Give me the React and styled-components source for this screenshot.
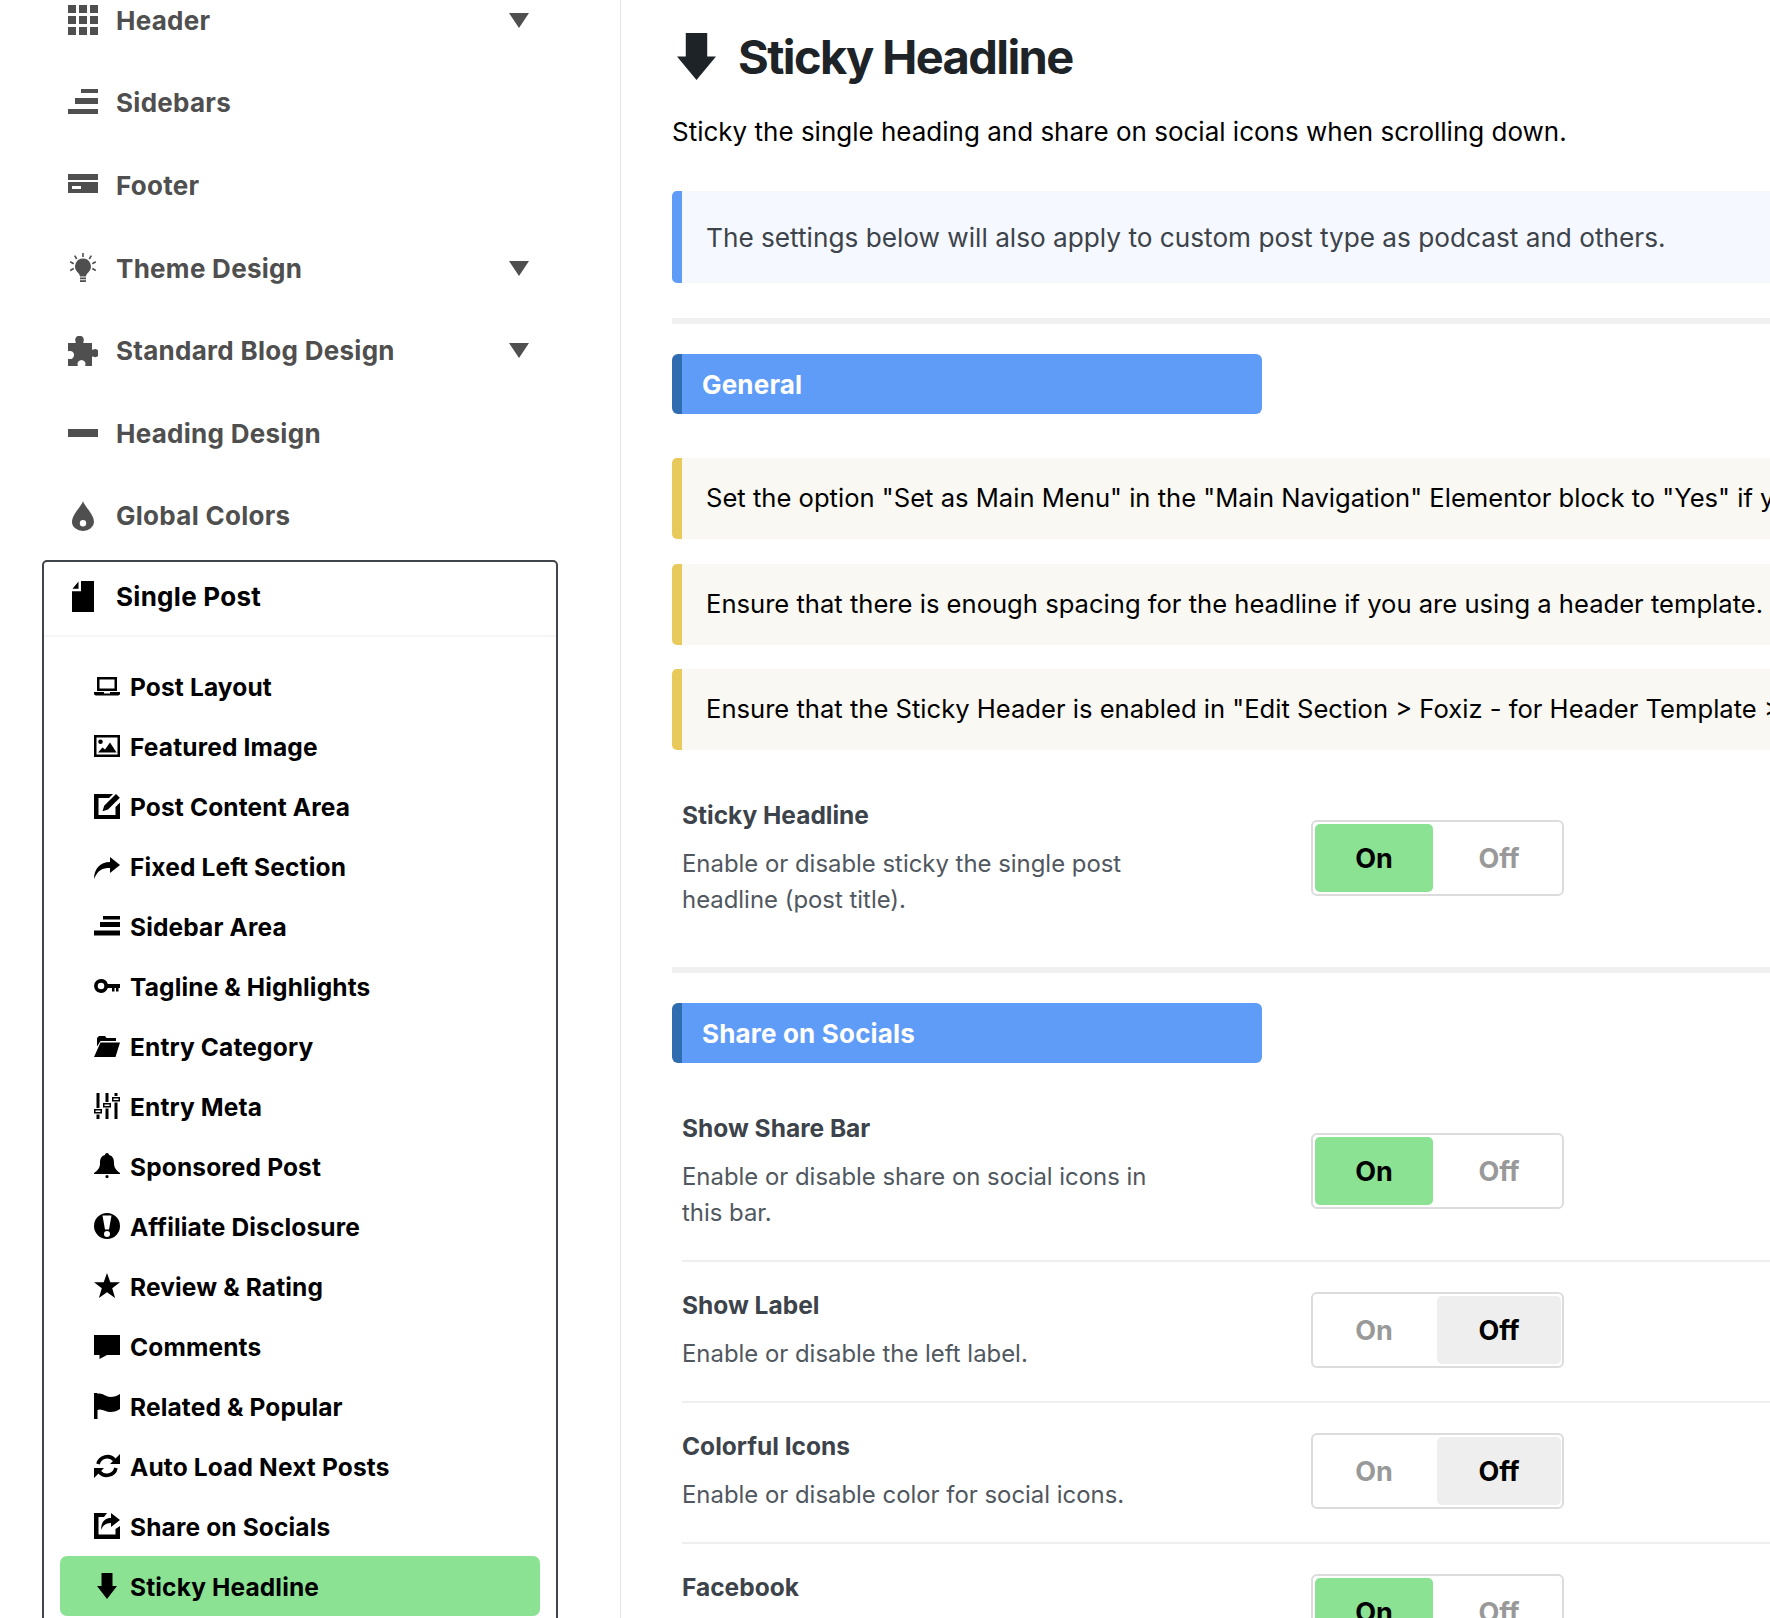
import React from 'react';
import styled, { createGlobalStyle } from 'styled-components';

const GlobalStyle = createGlobalStyle`
    html, body {
        margin: 0;
        padding: 0;
        background: #fff;
        font-family: Inter, "Noto Sans", "Liberation Sans", sans-serif;
    }
`

const Page = styled.div`
    display: flex;
    width: 1770px;
    height: 1618px;
    overflow: hidden;
`
const Sidebar = styled.aside`
    flex: 0 0 621px;
    box-sizing: border-box;
    height: 1618px;
    border-right: 1px solid #e4e4e4;
    padding: 0 62px 0 42px;
`
const TopMenu = styled.ul`
    list-style: none;
    margin: -21px 0 0;
    padding: 0;
`
const TopItem = styled.li`
    display: flex;
    align-items: center;
    height: 82.6px;
    padding-left: 26px;
    color: #4f4f4f;
    font-size: 26px;
    font-weight: 700;
    letter-spacing: .28px;
    svg { flex: none; }
`
const TopLabel = styled.span`
    flex: 1;
    margin-left: 18px;
`
const Caret = styled.i`
    width: 0;
    height: 0;
    margin-right: 29px;
    border-left: 10px solid transparent;
    border-right: 10px solid transparent;
    border-top: 15px solid #4f4f4f;
`
const Panel = styled.section`
    box-sizing: border-box;
    width: 516px;
    margin-top: 3px;
    height: 1200px;
    border: 2px solid #40454b;
    border-radius: 5px;
`
const PanelHead = styled.div`
    display: flex;
    align-items: center;
    box-sizing: border-box;
    height: 75px;
    padding: 0 0 4px 28px;
    border-bottom: 2px solid #f6f6f6;
    color: #000;
    font-size: 26px;
    font-weight: 700;
    letter-spacing: .28px;
    span { margin-left: 22px; }
`
const SubMenu = styled.ul`
    list-style: none;
    margin: 0;
    padding: 19px 16px 0;
`
const SubItem = styled.li`
    display: flex;
    align-items: center;
    height: 60px;
    padding-left: 34px;
    border-radius: 7px;
    color: #000;
    font-size: 24.5px;
    font-weight: 700;
    letter-spacing: .14px;
    background: ${props => props.$active ? '#8ae292' : 'transparent'};
    span { margin: 1px 0 0 10px; }
`
const Main = styled.main`
    flex: 1;
    min-width: 0;
    padding: 0 0 0 51px;
`
const Title = styled.h1`
    display: flex;
    align-items: center;
    gap: 22px;
    height: 56px;
    margin: 28px 0 0 5px;
    color: #1d2327;
    font-size: 47px;
    font-weight: 700;
    letter-spacing: -1.6px;
`
const Lead = styled.p`
    margin: 31px 0 0;
    color: #000;
    font-size: 26px;
    line-height: 34px;
`
const Note = styled.div`
    display: flex;
    align-items: center;
    box-sizing: border-box;
    height: ${props => props.$tall ? '92px' : '81px'};
    padding: 0 0 ${props => props.$tall ? '0' : '2px'} 24px;
    border-left: 10px solid ${props => props.$tall ? '#5f9cf7' : '#e8ca5c'};
    border-radius: 5px 0 0 5px;
    background: ${props => props.$tall ? '#f5f8fe' : '#f9f8f3'};
    color: ${props => props.$tall ? '#3c434a' : '#000'};
    font-size: ${props => props.$tall ? '26.2px' : '25.6px'};
    white-space: nowrap;
    overflow: hidden;
`
const InfoWrap = styled.div`
    margin-top: 42px;
`
const NoteStack = styled.div`
    display: flex;
    flex-direction: column;
    gap: 24.5px;
    margin-top: 44px;
`
const Rule = styled.hr`
    height: 6px;
    margin: ${props => props.$first ? '35px' : '0'} 0 30px;
    border: 0;
    background: #f0f0f0;
`
const SectionBar = styled.h2`
    display: flex;
    align-items: center;
    box-sizing: border-box;
    width: 590px;
    height: 60px;
    margin: 0;
    padding-left: 20px;
    border-left: 10px solid #2f6db0;
    border-radius: 6px;
    background: #5f9cf7;
    color: #fff;
    font-size: 26px;
    font-weight: 700;
    letter-spacing: .18px;
`
const FieldGroup = styled.div`
    padding: 22px 0 20px;
`
const Field = styled.div`
    display: flex;
    align-items: center;
    margin-left: 10px;
    padding: 28px 0 29px;
    border-bottom: 2px solid #efefef;
    &:last-child { border-bottom: 0; }
`
const FieldText = styled.div`
    width: 629px;
    flex: none;
`
const FieldName = styled.div`
    color: #3c434a;
    font-size: 24.5px;
    font-weight: 650;
    line-height: 30px;
`
const FieldDesc = styled.div`
    max-width: 480px;
    margin-top: 16px;
    color: #50575e;
    font-size: 23.9px;
    line-height: 36px;
`
const Toggle = styled.div`
    display: flex;
    box-sizing: border-box;
    width: 253px;
    height: 76px;
    margin-top: -2px;
    gap: 4px;
    padding: 2px;
    border: 2px solid #dcdcdc;
    border-radius: 6px;
`
const ToggleBtn = styled.div`
    display: flex;
    align-items: center;
    justify-content: center;
    flex: ${props => props.$wide ? '0 0 124px' : '0 0 118px'};
    border-radius: 5px;
    color: ${props => props.$on ? '#000' : '#999'};
    background: ${props => props.$on ? props.$bg : 'transparent'};
    font-size: 27px;
    font-weight: 700;
`

const Icon = ({ size = 26, height, color = 'currentColor', children, box = '0 0 26 26' }) => (
    <svg width={size} height={height || size} viewBox={box} fill={color} preserveAspectRatio="none">{children}</svg>
)

const downArrow = <path d="M7.500 0h11v13H23L13 26 3 13h4.500z" />

const icons = {
    grid: <><rect x="0" y="0" width="8" height="8" /><rect x="11" y="0" width="8" height="8" /><rect x="22" y="0" width="8" height="8" /><rect x="0" y="11" width="8" height="8" /><rect x="11" y="11" width="8" height="8" /><rect x="22" y="11" width="8" height="8" /><rect x="0" y="22" width="8" height="8" /><rect x="11" y="22" width="8" height="8" /><rect x="22" y="22" width="8" height="8" /></>,
    sidebars: <><rect x="13" y="1" width="17" height="4" /><rect x="7" y="10" width="23" height="6" /><rect x="0" y="21" width="30" height="5" /></>,
    footer: <path fillRule="evenodd" d="M0 4h30v6H0zM0 12h30v11H0zM4 16v3h9v-3z" />,
    bulb: <><path d="M15 5.500a8 8 0 0 0-5.500 13.700c1.500 1.500 2.500 3 2.500 4.300h6c0-1.300 1-2.800 2.500-4.300A8 8 0 0 0 15 5.500z" /><rect x="12" y="24.500" width="6" height="1.800" /><rect x="12" y="27.200" width="6" height="1.800" /><path d="M14.200 0h1.600v4h-1.600zM6 3l1.400-.8 2 3.400-1.400.8zM24 3l-1.400-.8-2 3.400 1.400.8zM1.800 9.500l.8-1.400 3.500 2-.8 1.400zM28.200 9.500l-.8-1.400-3.500 2 .8 1.400zM2.600 18.200l-.8-1.400 3.500-2 .8 1.400zM27.400 18.200l.8-1.400-3.500-2-.8 1.400z" /></>,
    puzzle: <path fillRule="evenodd" d="M0 7h7c.8 0 1-.6.6-1.300A4.300 4.300 0 1 1 15.400 5.700C15 6.400 15.200 7 16 7h8v6c0 .8.6 1 1.300.6a4 4 0 1 1 0 7c-.7-.4-1.300-.2-1.300.6V30h-6c-.8 0-1-.6-.6-1.200a4 4 0 1 0-7.800 0c.4.600.2 1.200-.6 1.200H0v-6.500c0-.8.6-1 1.200-.6a4 4 0 1 0 0-7.800c-.6.4-1.200.2-1.200-.6z" />,
    dash: <rect x="0" y="11" width="30" height="8" />,
    drop: <path fillRule="evenodd" d="M15 0c1 5 11 13 11 21a11 9 0 0 1-22 0C4 13 14 5 15 0zM15 19a3.200 3.200 0 1 0 0 6.400 3.200 3.200 0 0 0 0-6.400z" />,
    single: <path d="M9 0h13v30H0V10h9zM6.500 .5V7.500H.5z" />,
    laptop: <path fillRule="evenodd" d="M3 4h20v14H3zM5.500 6.500v9h15v-9zM0 19h10v1.500h6V19h10v1.500c0 1-1 2-2 2H2c-1 0-2-1-2-2z" />,
    image: <path fillRule="evenodd" d="M0 2h26v22H0zM2.500 4.500v17h21v-17zM6.500 6.500a2.300 2.300 0 1 1 0 4.600 2.300 2.300 0 0 1 0-4.600zM4 19.500l4.500-5 2.500 2 5-7 6.500 10z" />,
    edit: <><path d="M0 1h19l-4 4H4.500v17h17v-8l4.500-4.500V26H0z" /><path d="M22 1l3.800 3.800L14 16.500l-5.500 1.700 1.700-5.500z" /></>,
    share: <path d="M16 4l10 8-10 8v-5c-8 0-12 2-16 11 0-10 6-17 16-17z" />,
    bars: <><rect x="9" y="3" width="17" height="3.500" /><rect x="6" y="9" width="20" height="5" /><rect x="0" y="17.500" width="26" height="5" /></>,
    key: <path fillRule="evenodd" d="M7 6a7 7 0 0 1 6.800 5H26v4h-1.500v3.500h-2.500V15h-1.500v3.500H18V15h-4.200A7 7 0 1 1 7 6zM7 9.700a3.300 3.300 0 1 0 0 6.600 3.300 3.300 0 0 0 0-6.600z" />,
    folder: <path d="M3 13.500V5l2-2h6l1.500 2H22v3H6.500zM6.500 9.500H26L21.500 24H0z" />,
    sliders: <path fillRule="evenodd" d="M2.500 0h3v15h-3zM0 16h8v4.500H0zM1.500 17.500V19h5v-1.500zM2.500 21.500h3V26h-3zM11.500 0h3v9h-3zM9 10h8v4.500H9zM10.500 11.500V13h5v-1.500zM11.500 15.500h3V26h-3zM20.500 0h3v3h-3zM18 4h8v4.500h-8zM19.500 5.500V7h5V5.500zM20.500 9.500h3V26h-3z" />,
    bell: <path d="M13 0a2 2 0 0 1 2 2c4 1 5 4 5 8 0 5 2 7 6 10v1H0v-1c4-3 6-5 6-10 0-4 1-7 5-8a2 2 0 0 1 2-2zM13 22a1.600 1.600 0 1 1 0 3.200 1.600 1.600 0 0 1 0-3.200z" />,
    alert: <path fillRule="evenodd" d="M13 0a13 13 0 1 1 0 26 13 13 0 0 1 0-26zM8.500 2.500L11 16.500h4l2.500-14zM13 18a3 3 0 1 0 0 6 3 3 0 0 0 0-6z" />,
    star: <path d="M13 0l3.300 9.200h9.700l-7.800 6 2.900 9.800-8.100-5.800L4.900 25l2.900-9.800-7.800-6h9.700z" />,
    comment: <path d="M0 2h26v20H13l-7.500 4v-4H0z" />,
    flag: <path d="M0 0h3.500v1c4-2 8 3 13 3 3 0 7-1 9.500-3v15c-2.500 2-6 3-9.500 3-5 0-9-4-13-2v9H0z" />,
    refresh: <><path d="M4 11A9.500 9.500 0 0 1 20.500 7M22 15A9.500 9.500 0 0 1 5.500 19" fill="none" stroke="currentColor" strokeWidth="3.600" /><path d="M26 1v10H16zM0 25V15h10z" /></>,
    shareBox: <><path d="M0 0h13l-3 4H4.500v17.500h17V16l4.500-3v13H0z" /><path d="M17 0l9 7-9 7v-4c-5 0-8 2-10 7 0-8 4-12 10-12z" /></>,
    down: downArrow,
}

const topItems = [
    { label: 'Header', icon: icons.grid, caret: true },
    { label: 'Sidebars', icon: icons.sidebars },
    { label: 'Footer', icon: icons.footer },
    { label: 'Theme Design', icon: icons.bulb, caret: true },
    { label: 'Standard Blog Design', icon: icons.puzzle, caret: true },
    { label: 'Heading Design', icon: icons.dash },
    { label: 'Global Colors', icon: icons.drop },
]

const subItems = [
    ['Post Layout', icons.laptop],
    ['Featured Image', icons.image],
    ['Post Content Area', icons.edit],
    ['Fixed Left Section', icons.share],
    ['Sidebar Area', icons.bars],
    ['Tagline & Highlights', icons.key],
    ['Entry Category', icons.folder],
    ['Entry Meta', icons.sliders],
    ['Sponsored Post', icons.bell],
    ['Affiliate Disclosure', icons.alert],
    ['Review & Rating', icons.star],
    ['Comments', icons.comment],
    ['Related & Popular', icons.flag],
    ['Auto Load Next Posts', icons.refresh],
    ['Share on Socials', icons.shareBox],
    ['Sticky Headline', icons.down, true],
]

const notices = [
    'Set the option "Set as Main Menu" in the "Main Navigation" Elementor block to "Yes" if you are using a header template.',
    'Ensure that there is enough spacing for the headline if you are using a header template.',
    'Ensure that the Sticky Header is enabled in "Edit Section > Foxiz - for Header Template > Sticky Header".',
]

const SwitchField = ({ name, desc, on }) => (
    <Field>
        <FieldText>
            <FieldName>{name}</FieldName>
            <FieldDesc>{desc}</FieldDesc>
        </FieldText>
        <Toggle>
            <ToggleBtn $on={on} $bg="#8ae292">On</ToggleBtn>
            <ToggleBtn $on={!on} $bg="#eeeeee" $wide>Off</ToggleBtn>
        </Toggle>
    </Field>
)

export default function App() {
    return (
        <Page>
            <GlobalStyle />
            <Sidebar>
                <TopMenu>
                    {topItems.map(item => (
                        <TopItem key={item.label}>
                            <Icon size={30} box="0 0 30 30">{item.icon}</Icon>
                            <TopLabel>{item.label}</TopLabel>
                            {item.caret && <Caret />}
                        </TopItem>
                    ))}
                </TopMenu>
                <Panel>
                    <PanelHead>
                        <Icon size={22} height={31} box="0 0 22 30">{icons.single}</Icon>
                        <span>Single Post</span>
                    </PanelHead>
                    <SubMenu>
                        {subItems.map(([label, icon, active]) => (
                            <SubItem key={label} $active={active}>
                                <Icon>{icon}</Icon>
                                <span>{label}</span>
                            </SubItem>
                        ))}
                    </SubMenu>
                </Panel>
            </Sidebar>
            <Main>
                <Title>
                    <Icon size={39} height={47} color="#1d2327" box="3 0 20 26">{downArrow}</Icon>
                    Sticky Headline
                </Title>
                <Lead>Sticky the single heading and share on social icons when scrolling down.</Lead>
                <InfoWrap>
                    <Note $tall>The settings below will also apply to custom post type as podcast and others.</Note>
                </InfoWrap>
                <Rule $first />
                <SectionBar>General</SectionBar>
                <NoteStack>
                    {notices.map(text => <Note key={text}>{text}</Note>)}
                </NoteStack>
                <FieldGroup>
                    <SwitchField
                        name="Sticky Headline"
                        desc="Enable or disable sticky the single post headline (post title)."
                        on
                    />
                </FieldGroup>
                <Rule />
                <SectionBar>Share on Socials</SectionBar>
                <FieldGroup>
                    <SwitchField
                        name="Show Share Bar"
                        desc="Enable or disable share on social icons in this bar."
                        on
                    />
                    <SwitchField name="Show Label" desc="Enable or disable the left label." />
                    <SwitchField name="Colorful Icons" desc="Enable or disable color for social icons." />
                    <SwitchField name="Facebook" desc="Enable or disable share to Facebook." on />
                </FieldGroup>
            </Main>
        </Page>
    )
}
